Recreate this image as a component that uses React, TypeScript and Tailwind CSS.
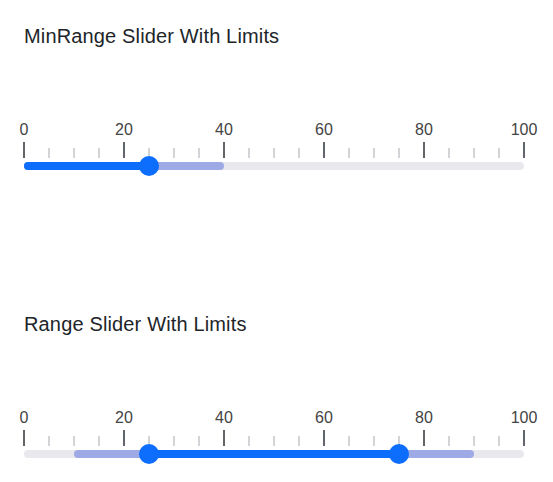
import React from "react";

const MIN = 0;
const MAX = 100;
const WIDTH = 500;

const pos = (v: number) => ((v - MIN) / (MAX - MIN)) * WIDTH;

function Scale() {
  const ticks = Array.from({ length: 21 }, (_, i) => i * 5);
  const labels = [0, 20, 40, 60, 80, 100];
  return (
    <>
      <div className="flex h-[20px] w-[500px] justify-between text-[16px] leading-[20px] text-[#444]">
        {labels.map((l) => (
          <div key={l} className="flex w-0 justify-center">
            <span className="whitespace-nowrap">{l}</span>
          </div>
        ))}
      </div>
      <div className="mt-[2px] flex h-[16px] w-[500px] items-end justify-between">
        {ticks.map((t) => (
          <div key={t} className="flex w-0 justify-center">
            {t % 20 === 0 ? (
              <div className="h-[16px] w-[2px] shrink-0 bg-[#62666b]" />
            ) : (
              <div className="h-[10px] w-[2px] shrink-0 bg-[#d3d4d8]" />
            )}
          </div>
        ))}
      </div>
    </>
  );
}

function Thumb({ value }: { value: number }) {
  return (
    <div
      className="absolute top-1/2 h-[20px] w-[20px] -translate-x-1/2 -translate-y-1/2 rounded-full bg-[#0d6efd]"
      style={{ left: pos(value) }}
    />
  );
}

function Slider({
  title,
  limit,
  range,
}: {
  title: string;
  limit: [number, number];
  range: [number, number];
}) {
  return (
    <section className="flex flex-col">
      <h2 className="text-[20px] leading-[24px] font-normal tracking-[0.15px] text-[#212529]">{title}</h2>
      <div className="mt-[72px] flex flex-col">
        <Scale />
        <div className="relative mt-[4px] h-[8px] w-[500px] rounded-full bg-[#e9e9ed]">
          <div
            className="absolute inset-y-0 rounded-full bg-[#9eaae6]"
            style={{ left: pos(limit[0]), width: pos(limit[1]) - pos(limit[0]) }}
          />
          <div
            className="absolute inset-y-0 rounded-full bg-[#0d6efd]"
            style={{ left: pos(range[0]), width: pos(range[1]) - pos(range[0]) }}
          />
          {range[0] > MIN && <Thumb value={range[0]} />}
          <Thumb value={range[1]} />
        </div>
      </div>
    </section>
  );
}

export default function App() {
  return (
    <div className="flex min-h-[482px] flex-col gap-[142px] bg-white pl-[24px] pt-[24px] font-['Liberation_Sans',Arial,sans-serif]">
      <Slider title="MinRange Slider With Limits" limit={[0, 40]} range={[0, 25]} />
      <Slider title="Range Slider With Limits" limit={[10, 90]} range={[25, 75]} />
    </div>
  );
}
